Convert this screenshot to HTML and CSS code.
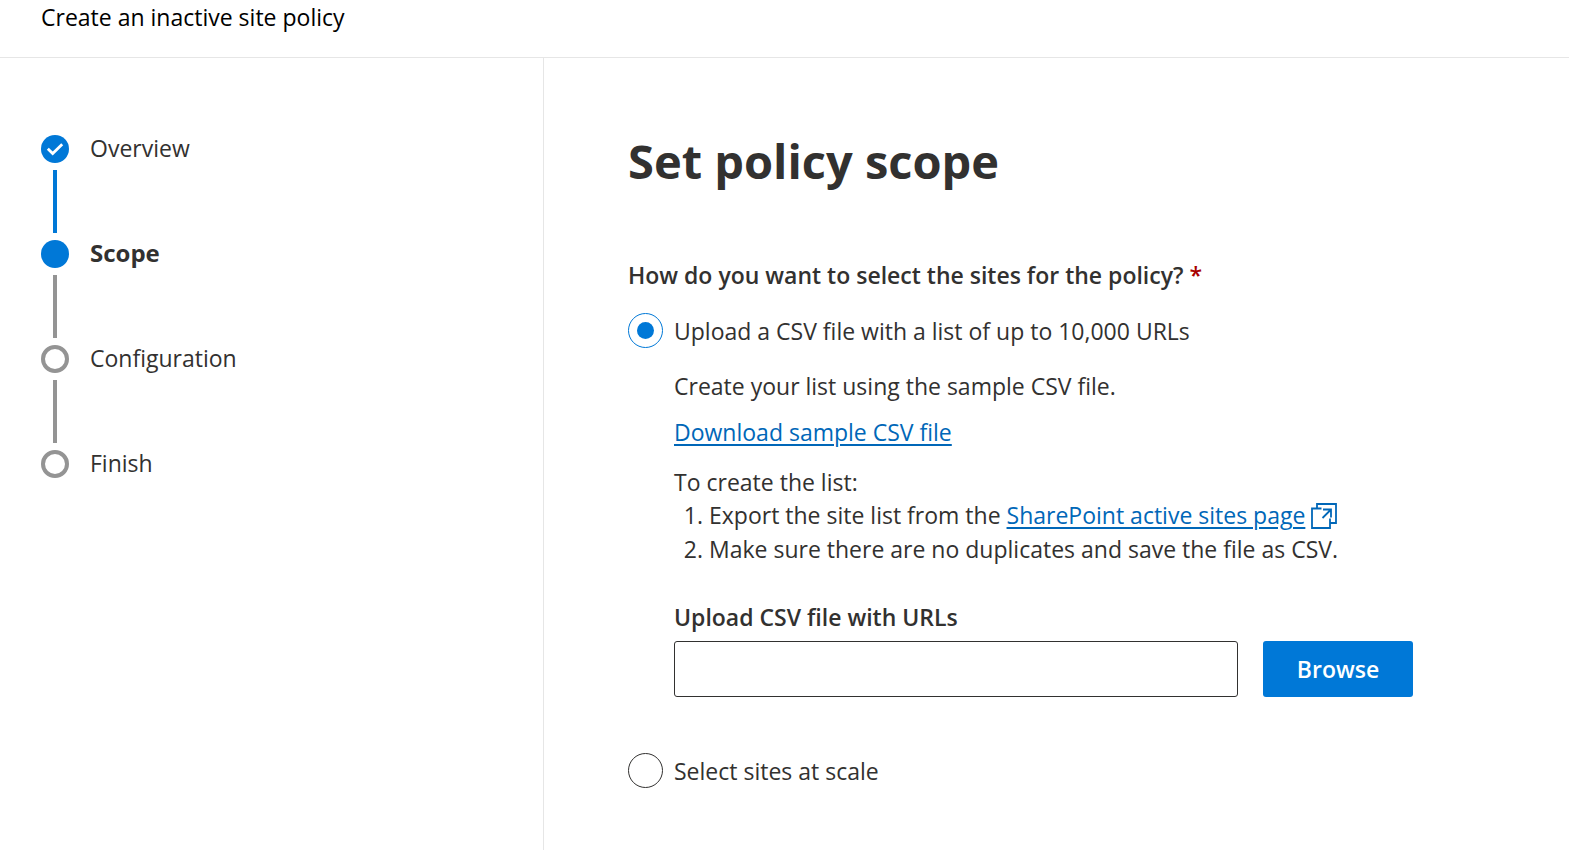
FILE: index.html
```html
<!DOCTYPE html>
<html lang="en">
<head>
<meta charset="utf-8">
<meta name="viewport" content="width=device-width, initial-scale=1">
<title>Create an inactive site policy</title>
<link rel="stylesheet" href="styles.css">
</head>
<body>
<header class="topbar">Create an inactive site policy</header>
<div class="wizard">
  <nav class="sidebar" aria-label="Progress">
    <ol class="steps">
      <li class="step step-done">
        <span class="marker"><svg viewBox="0 0 28 28" aria-hidden="true"><path d="M6.8 13.7 L11.7 18.6 L21.2 9.2"/></svg></span>
        <span class="step-name">Overview</span>
      </li>
      <li class="step step-current" aria-current="step">
        <span class="marker"></span>
        <span class="step-name">Scope</span>
      </li>
      <li class="step">
        <span class="marker"></span>
        <span class="step-name">Configuration</span>
      </li>
      <li class="step">
        <span class="marker"></span>
        <span class="step-name">Finish</span>
      </li>
    </ol>
  </nav>
  <main class="content">
    <h1 class="title">Set policy scope</h1>
    <form class="form">
      <div class="question" id="question">How do you want to select the sites for the policy? <span class="required">*</span></div>
      <div role="radiogroup" aria-labelledby="question">
        <div class="option">
          <input class="radio" type="radio" name="source" id="source-csv" checked>
          <label for="source-csv">Upload a CSV file with a list of up to 10,000 URLs</label>
        </div>
        <div class="details">
          <p class="hint">Create your list using the sample CSV file.</p>
          <p class="download"><a class="link" href="#sample">Download sample CSV file</a></p>
          <p class="intro">To create the list:</p>
          <ol class="instructions">
            <li>Export the site list from the <a class="link" href="#sites">SharePoint active sites page</a> <svg class="external" viewBox="0 0 26 26" aria-hidden="true"><path d="M6 5.5 V1 H25 V20 H19 M10.5 5.5 H1 V25 H19 V15.5 M12 6.5 H20 V14.5 M20 6.5 L11.5 15"/></svg></li>
            <li>Make sure there are no duplicates and save the file as CSV.</li>
          </ol>
          <label class="field-label" for="csv-file">Upload CSV file with URLs</label>
          <div class="field-row">
            <input class="field" type="text" id="csv-file">
            <button class="browse" type="button">Browse</button>
          </div>
        </div>
        <div class="option">
          <input class="radio" type="radio" name="source" id="source-scale">
          <label for="source-scale">Select sites at scale</label>
        </div>
      </div>
    </form>
  </main>
</div>
</body>
</html>
```
FILE: styles.css
```css
* {
  box-sizing: border-box;
}

body {
  margin: 0;
  min-height: 100vh;
  display: flex;
  flex-direction: column;
  background: #fff;
  color: #323130;
  font: 23px/34px "Open Sans", "Noto Sans", sans-serif;
}

p, ol, h1 {
  margin: 0;
  padding: 0;
}

.topbar {
  padding: 0 41px 23px;
  border-bottom: 1px solid #e6e6e6;
  color: #000;
}

.wizard {
  flex: 1;
  display: flex;
}

.sidebar {
  flex: 0 0 544px;
  padding: 77px 41px 0;
  border-right: 1px solid #e6e6e6;
}

.steps {
  list-style: none;
}

.step {
  display: grid;
  grid-template-columns: 28px 1fr;
  column-gap: 21px;
  row-gap: 7px;
  line-height: 26px;
}

.step:not(:last-child)::after {
  content: "";
  width: 4px;
  height: 63px;
  margin-bottom: 7px;
  justify-self: center;
  background: #949494;
}

.step-done:not(:last-child)::after {
  background: #0078d7;
}

.marker {
  width: 28px;
  height: 28px;
  border: 4px solid #949494;
  border-radius: 50%;
}

.step-done .marker,
.step-current .marker {
  border: 0;
  background: #0078d7;
}

.marker svg {
  display: block;
  fill: none;
  stroke: #fff;
  stroke-width: 2.8;
}

.step-current .step-name {
  font-size: 24px;
  font-weight: 700;
}

.content {
  flex: 1;
  padding: 72px 84px 60px;
}

.title {
  font-size: 47px;
  line-height: 62px;
  font-weight: 700;
}

.question {
  margin: 66px 0 21px;
  font-weight: 600;
}

.required {
  color: #a80000;
}

.option {
  display: flex;
  align-items: center;
  gap: 11px;
}

.radio {
  flex: none;
  appearance: none;
  display: grid;
  place-items: center;
  width: 35px;
  height: 35px;
  margin: 0;
  border: 1px solid #323130;
  border-radius: 50%;
}

.radio:checked {
  border-color: #0078d7;
}

.radio:checked::before {
  content: "";
  width: 17px;
  height: 17px;
  border-radius: 50%;
  background: #0078d7;
}

.details {
  max-width: 785px;
  padding: 21px 0 56px 46px;
}

.download {
  margin: 12px 0 17px;
}

.intro {
  line-height: 32px;
}

.link {
  color: #0067b8;
  text-decoration-thickness: 2px;
  text-underline-offset: 3px;
}

.instructions {
  padding-left: 35px;
}

.external {
  width: 26px;
  height: 26px;
  vertical-align: -5px;
  fill: none;
  stroke: #0067b8;
  stroke-width: 1.8;
}

.field-label {
  display: block;
  margin: 34px 0 7px;
  font-weight: 600;
}

.field-row {
  display: flex;
  gap: 25px;
}

.field {
  flex: 1;
  min-width: 0;
  height: 56px;
  padding: 0 16px;
  border: 1px solid #323130;
  border-radius: 3px;
  font: inherit;
}

.browse {
  width: 150px;
  height: 56px;
  border: 0;
  border-radius: 3px;
  background: #0078d7;
  color: #fff;
  font: inherit;
  font-weight: 600;
}
```
